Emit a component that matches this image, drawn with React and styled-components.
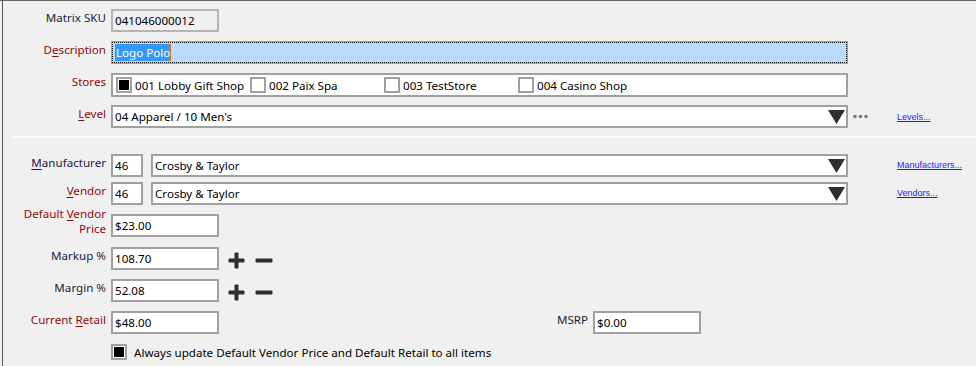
import styled, { createGlobalStyle } from 'styled-components';

const GlobalStyle = createGlobalStyle`
  body {
    margin: 0;
    background: #f0f0f0;
    font-family: "Noto Sans", "Open Sans", sans-serif;
    font-size: 11.6px;
  }
`;

const Frame = styled.div`
  box-sizing: border-box;
  width: 976px;
  height: 366px;
  border-top: 1px solid #646464;
  padding-left: 2px;
  overflow: hidden;
`;

const Panel = styled.div`
  box-sizing: border-box;
  height: 100%;
  border-left: 1px solid #5a5a5a;
  padding-top: 8px;
  display: flex;
  flex-direction: column;
`;

const Row = styled.div`
  display: flex;
  align-items: flex-start;
  margin-top: ${(p) => p.$gap || 0}px;
`;

const Label = styled.div`
  flex: none;
  width: 103px;
  margin-right: 5px;
  margin-top: ${(p) => p.$offset || -1}px;
  text-align: right;
  line-height: ${(p) => (p.$multi ? '15px' : '19px')};
  color: ${(p) => (p.$red ? '#8b0a0a' : '#1c1c38')};
  white-space: ${(p) => (p.$multi ? 'normal' : 'nowrap')};

  u {
    text-decoration: underline;
    text-underline-offset: 2px;
  }
`;

const TextBox = styled.div`
  box-sizing: border-box;
  flex: none;
  width: ${(p) => p.$w}px;
  height: 23px;
  margin-right: ${(p) => p.$mr || 0}px;
  border: 2px solid ${(p) => (p.$readonly ? '#b4b4b4' : '#a0a0a0')};
  background: ${(p) => (p.$readonly ? '#f0f0f0' : '#fff')};
  padding: 0 2px;
  line-height: 19px;
  color: #000;
  white-space: nowrap;
  overflow: hidden;
`;

const FocusBox = styled.div`
  box-sizing: border-box;
  width: 737px;
  height: 23px;
  border: 1px solid #a0a0a0;
  outline: 1px dotted #000;
  outline-offset: -2px;
  background: #b8dcff;
  padding: 2px 0 0 3px;
  line-height: 17px;
`;

const Selected = styled.span`
  display: inline-block;
  background: #3399ff;
  color: #fff;
  padding-left: 1px;
  border-right: 1px solid #e87400;
`;

const Combo = styled(TextBox)`
  display: flex;
  align-items: center;
  justify-content: space-between;
  padding-right: 1px;
`;

const StoreBox = styled.div`
  box-sizing: border-box;
  width: 737px;
  height: 24px;
  border: 2px solid #a0a0a0;
  background: #fff;
  padding-left: 3px;
  display: flex;
  align-items: center;
`;

const StoreItem = styled.div`
  width: 134px;
  display: flex;
  align-items: center;
  gap: 3px;
  color: #000;
  white-space: nowrap;
`;

const Check = styled.span`
  box-sizing: border-box;
  flex: none;
  width: 16px;
  height: 16px;
  border: 2px solid #a0a0a0;
  background: #fff;
  padding: 1px;
  display: inline-flex;

  &::after {
    content: '';
    flex: 1;
    background: ${(p) => (p.$checked ? '#000' : 'transparent')};
  }
`;

const Dots = styled.svg`
  flex: none;
  margin: 9px 0 0 5px;
`;

const LinkSlot = styled.div`
  flex: none;
  margin-left: ${(p) => p.$ml}px;
  margin-top: ${(p) => p.$mt || 2}px;
`;

const SmallLink = styled.a`
  font-family: "Liberation Sans", Arial, sans-serif;
  font-size: 9px;
  line-height: 12px;
  color: #1a1aff;
  text-decoration: underline;
  cursor: pointer;
`;

const Separator = styled.div`
  height: 2px;
  margin: 8px 0 0 8px;
  background: #fdfdfd;
`;

const StepIcon = styled.svg`
  flex: none;
  margin-left: ${(p) => p.$ml}px;
  margin-top: 5px;
`;

const MsrpGroup = styled.div`
  display: flex;
  align-items: flex-start;
  margin-left: 329px;
`;

const MsrpLabel = styled(Label)`
  width: 40px;
`;

const CheckRow = styled.div`
  display: flex;
  align-items: center;
  margin: 10px 0 0 108px;
  gap: 7px;
  color: #000;
`;

const Arrow = () => (
  <svg width="17" height="14" viewBox="0 0 17 14">
    <path d="M0 0 H17 L8.5 14 Z" fill="#2e3030" />
  </svg>
);

const Plus = () => (
  <StepIcon $ml={9} width="17" height="17" viewBox="0 0 17 17">
    <rect x="6.5" y="0.5" width="4" height="16" rx="1" fill="#2e2e2e" />
    <rect x="0.5" y="6.5" width="16" height="4" rx="1" fill="#2e2e2e" />
  </StepIcon>
);

const Minus = () => (
  <StepIcon $ml={10} width="18" height="17" viewBox="0 0 18 17">
    <rect x="0.5" y="6.5" width="17" height="4" rx="1" fill="#2e2e2e" />
  </StepIcon>
);

const stores = [
  { name: '001 Lobby Gift Shop', checked: true },
  { name: '002 Paix Spa', checked: false },
  { name: '003 TestStore', checked: false },
  { name: '004 Casino Shop', checked: false },
];

export default function App() {
  return (
    <>
      <GlobalStyle />
      <Frame>
        <Panel>
          <Row>
            <Label>Matrix SKU</Label>
            <TextBox $w={108} $readonly>041046000012</TextBox>
          </Row>
          <Row $gap={9}>
            <Label $red>D<u>e</u>scription</Label>
            <FocusBox>
              <Selected>Logo Polo</Selected>
            </FocusBox>
          </Row>
          <Row $gap={9}>
            <Label $red>Stores</Label>
            <StoreBox>
              {stores.map((s) => (
                <StoreItem key={s.name}>
                  <Check $checked={s.checked} />
                  {s.name}
                </StoreItem>
              ))}
            </StoreBox>
          </Row>
          <Row $gap={8}>
            <Label $red><u>L</u>evel</Label>
            <Combo $w={737}>
              04 Apparel / 10 Men's
              <Arrow />
            </Combo>
            <Dots width="15" height="5" viewBox="0 0 15 5">
              <circle cx="2" cy="2.5" r="1.8" fill="#7a7a7a" />
              <circle cx="7.5" cy="2.5" r="1.8" fill="#7a7a7a" />
              <circle cx="13" cy="2.5" r="1.8" fill="#7a7a7a" />
            </Dots>
            <LinkSlot $ml={29} $mt={3}>
              <SmallLink>Levels...</SmallLink>
            </LinkSlot>
          </Row>
          <Separator />
          <Row $gap={16}>
            <Label><u>M</u>anufacturer</Label>
            <TextBox $w={32} $mr={8}>46</TextBox>
            <Combo $w={697}>
              Crosby &amp; Taylor
              <Arrow />
            </Combo>
            <LinkSlot $ml={49}>
              <SmallLink>Manufacturers...</SmallLink>
            </LinkSlot>
          </Row>
          <Row $gap={5}>
            <Label $red><u>V</u>endor</Label>
            <TextBox $w={32} $mr={8}>46</TextBox>
            <Combo $w={697}>
              Crosby &amp; Taylor
              <Arrow />
            </Combo>
            <LinkSlot $ml={49}>
              <SmallLink>Vendors...</SmallLink>
            </LinkSlot>
          </Row>
          <Row $gap={9}>
            <Label $red $multi $offset={-8}>
              Default <u>V</u>endor Price
            </Label>
            <TextBox $w={108}>$23.00</TextBox>
          </Row>
          <Row $gap={10}>
            <Label>Markup %</Label>
            <TextBox $w={108}>108.70</TextBox>
            <Plus />
            <Minus />
          </Row>
          <Row $gap={9}>
            <Label>Margin %</Label>
            <TextBox $w={108}>52.08</TextBox>
            <Plus />
            <Minus />
          </Row>
          <Row $gap={9}>
            <Label $red>Current <u>R</u>etail</Label>
            <TextBox $w={108}>$48.00</TextBox>
            <MsrpGroup>
              <MsrpLabel>MSRP</MsrpLabel>
              <TextBox $w={108}>$0.00</TextBox>
            </MsrpGroup>
          </Row>
          <CheckRow>
            <Check $checked />
            Always update Default Vendor Price and Default Retail to all items
          </CheckRow>
        </Panel>
      </Frame>
    </>
  );
}
